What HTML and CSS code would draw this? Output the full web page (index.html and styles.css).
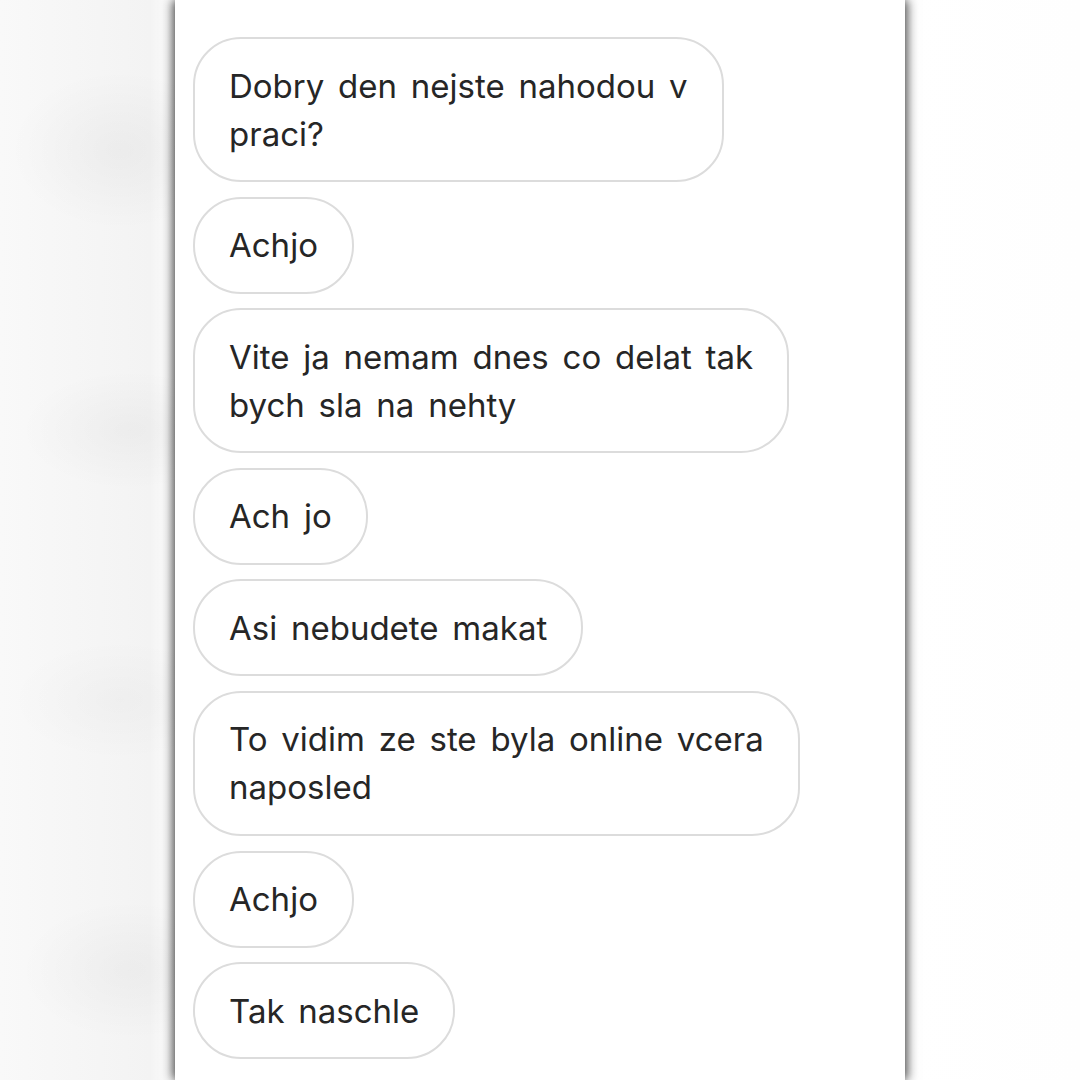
FILE: index.html
```html
<!DOCTYPE html>
<html lang="cs">
<head>
<meta charset="utf-8">
<title>Chat</title>
<link rel="stylesheet" href="styles.css">
</head>
<body>
<div class="stage">
  <div class="panel">
    <div class="thread">
      <div class="bubble">Dobry den nejste nahodou v<br>praci?</div>
      <div class="bubble">Achjo</div>
      <div class="bubble">Vite ja nemam dnes co delat tak<br>bych sla na nehty</div>
      <div class="bubble">Ach jo</div>
      <div class="bubble">Asi nebudete makat</div>
      <div class="bubble">To vidim ze ste byla online vcera<br>naposled</div>
      <div class="bubble">Achjo</div>
      <div class="bubble">Tak naschle</div>
    </div>
  </div>
</div>
</body>
</html>
```
FILE: styles.css
```css
html, body {
  margin: 0;
  padding: 0;
  width: 1080px;
  height: 1080px;
  overflow: hidden;
}
body {
  font-family: Inter, "Liberation Sans", Arial, sans-serif;
  background: #ffffff;
}
.stage {
  width: 1080px;
  height: 1080px;
  display: flex;
  justify-content: center;
  background:
    radial-gradient(ellipse 110px 80px at 120px 150px, rgba(0,0,0,0.035), transparent),
    radial-gradient(ellipse 110px 60px at 130px 430px, rgba(0,0,0,0.03), transparent),
    radial-gradient(ellipse 110px 60px at 120px 700px, rgba(0,0,0,0.025), transparent),
    radial-gradient(ellipse 110px 70px at 130px 970px, rgba(0,0,0,0.03), transparent),
    linear-gradient(90deg, #f9f9f9 0px, #f3f3f3 150px, #ffffff 175px, #ffffff 905px, #fefefe 1080px);
}
.panel {
  width: 730px;
  height: 1080px;
  background: #ffffff;
  box-shadow: -3px 0 10px rgba(0,0,0,0.55), 3px 0 10px rgba(0,0,0,0.55);
  box-sizing: border-box;
  padding: 37px 0 0 18px;
}
.thread {
  display: flex;
  flex-direction: column;
  align-items: flex-start;
  gap: 14.6px;
}
.bubble {
  border: 2px solid #dcdcdc;
  border-radius: 48px;
  padding: 22.5px 34px;
  font-size: 33px;
  line-height: 48px;
  word-spacing: 4.5px;
  color: #262626;
  white-space: nowrap;
  background: #ffffff;
}
```
